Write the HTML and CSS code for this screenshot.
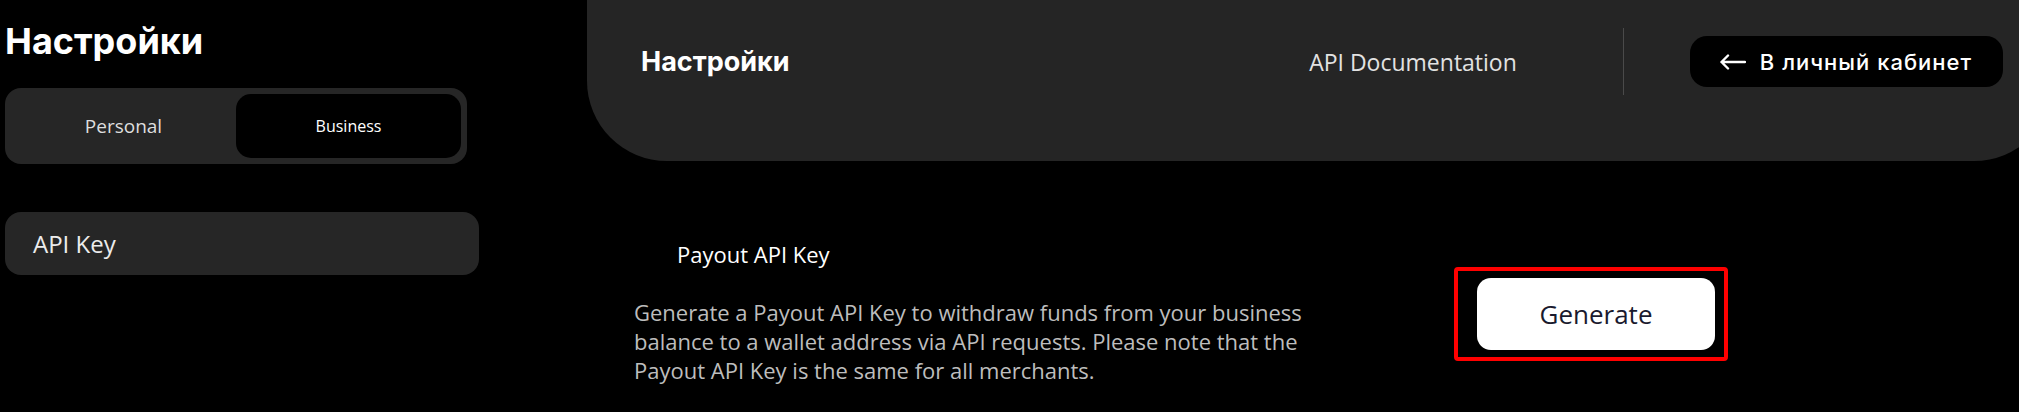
FILE: index.html
```html
<!DOCTYPE html>
<html lang="ru">
<head>
<meta charset="utf-8">
<title>Настройки</title>
<link rel="stylesheet" href="styles.css">
</head>
<body>
<div class="page">
  <aside class="sidebar">
    <h1 class="side-title">Настройки</h1>
    <div class="toggle">
      <button class="toggle-item">Personal</button>
      <button class="toggle-item active">Business</button>
    </div>
    <nav class="side-nav">
      <a class="nav-item">API Key</a>
    </nav>
  </aside>
  <main class="main">
    <header class="topbar">
      <div class="topbar-title">Настройки</div>
      <div class="topbar-right">
        <a class="doc-link">API Documentation</a>
        <span class="divider"></span>
        <a class="back-btn">
          <svg class="back-icon" width="27" height="16" viewBox="0 0 27 16" fill="none" stroke="#fff" stroke-width="2.4" stroke-linecap="round" stroke-linejoin="round"><path d="M26 8H2.5M9 1.5L2.5 8L9 14.5"/></svg>
          <span>В личный кабинет</span>
        </a>
      </div>
    </header>
    <section class="content">
      <div class="info">
        <div class="info-title">Payout API Key</div>
        <p class="info-desc">Generate a Payout API Key to withdraw funds from your business balance to a wallet address via API requests. Please note that the Payout API Key is the same for all merchants.</p>
      </div>
      <div class="highlight">
        <button class="gen-btn">Generate</button>
      </div>
    </section>
  </main>
</div>
</body>
</html>
```
FILE: styles.css
```css
html, body {
  margin: 0;
  padding: 0;
  background: #000;
  overflow: hidden;
}
body {
  width: 2019px;
  height: 412px;
  font-family: "Open Sans", "Noto Sans", sans-serif;
  color: #fff;
}
.page {
  display: flex;
  align-items: flex-start;
  width: 2019px;
}
.sidebar {
  flex: 0 0 474px;
  margin-left: 5px;
  padding-top: 20px;
}
.side-title {
  margin: 0;
  font-family: Inter, Roboto, "Liberation Sans", sans-serif;
  font-weight: 700;
  font-size: 36px;
  line-height: 42px;
  color: #fff;
}
.toggle {
  margin-top: 26px;
  width: 462px;
  box-sizing: border-box;
  height: 76px;
  padding: 6px;
  background: #262626;
  border-radius: 16px;
  display: grid;
  grid-template-columns: 1fr 1fr;
}
.toggle-item {
  border: 0;
  background: transparent;
  font-family: "Open Sans", "Noto Sans", sans-serif;
  font-size: 19px;
  color: #dedede;
  border-radius: 15px;
  padding: 0;
  height: 64px;
}
.toggle-item.active {
  background: #000;
  color: #fff;
  font-size: 16px;
}
.side-nav {
  margin-top: 48px;
}
.nav-item {
  display: flex;
  align-items: center;
  height: 63px;
  box-sizing: border-box;
  padding-left: 28px;
  background: #262626;
  border-radius: 16px;
  font-size: 24px;
  color: #ececec;
}
.main {
  flex: 1;
  margin-left: 108px;
  margin-right: -35px;
}
.topbar {
  height: 161px;
  box-sizing: border-box;
  padding: 28px 51px 66px 54px;
  background: #252525;
  border-radius: 0 0 80px 80px;
  display: flex;
  align-items: center;
  justify-content: space-between;
}
.topbar-title {
  font-family: Inter, Roboto, "Liberation Sans", sans-serif;
  font-weight: 700;
  font-size: 27px;
  color: #fff;
}
.topbar-right {
  display: flex;
  align-items: center;
}
.doc-link {
  font-size: 23px;
  color: #e2e2e2;
}
.divider {
  width: 1px;
  height: 67px;
  background: #4a4a4a;
  margin: 0 66px 0 106px;
}
.back-btn {
  display: flex;
  align-items: center;
  gap: 14px;
  height: 51px;
  box-sizing: border-box;
  padding: 0 31px 0 29px;
  background: #000;
  border-radius: 17px;
  font-family: Inter, Roboto, "Liberation Sans", sans-serif;
  font-weight: 500;
  font-size: 22px;
  letter-spacing: 1px;
  color: #fff;
}
.back-icon {
  display: block;
}
.content {
  display: flex;
  align-items: center;
  gap: 120px;
  padding: 78px 0 0 47px;
}
.info {
  width: 700px;
}
.info-title {
  padding-left: 43px;
  font-size: 22px;
  line-height: 30px;
  color: #fff;
}
.info-desc {
  margin: 29px 0 0;
  font-size: 22px;
  line-height: 29px;
  color: #bdbdbd;
}
.highlight {
  margin-top: 4px;
  border: 4px solid #ff0000;
  border-radius: 4px;
  padding: 7px 9px 7px 19px;
}
.gen-btn {
  display: block;
  width: 238px;
  height: 72px;
  border: 0;
  border-radius: 14px;
  background: #fff;
  color: #1a1a2e;
  font-family: "Open Sans", "Noto Sans", sans-serif;
  font-size: 26px;
}
```
